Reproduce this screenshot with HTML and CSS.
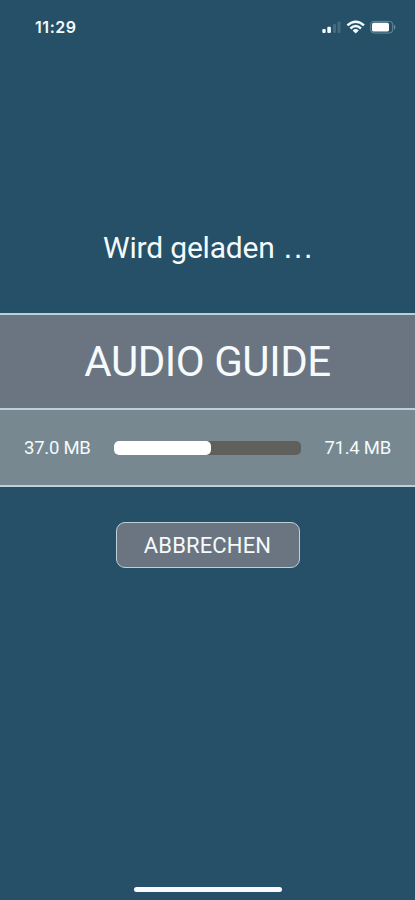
FILE: index.html
```html
<!DOCTYPE html>
<html lang="de">
<head>
<meta charset="utf-8">
<meta name="viewport" content="width=device-width">
<title>Audio Guide</title>
<link rel="stylesheet" href="styles.css">
</head>
<body>
<div class="screen">
  <header class="status">
    <span class="clock">11:29</span>
    <svg class="indicators" width="76" height="18" viewBox="0 0 76 18" fill="none">
      <rect x="1.3" y="10" width="3.4" height="4" rx="1" fill="#f2f9fb"/>
      <rect x="6.3" y="7.8" width="3.6" height="6.2" rx="1" fill="#f2f9fb"/>
      <rect x="12" y="5" width="3" height="9" rx="1" fill="#456b7d"/>
      <rect x="16.5" y="2.5" width="3" height="11.5" rx="1" fill="#456b7d"/>
      <g stroke="#f2f9fb" stroke-width="2.4">
        <path d="M26.4 6.3Q34.7-.9 43 6.3"/>
        <path d="M29.4 9.5Q34.7 4.7 40 9.5"/>
      </g>
      <path d="M31.6 11.4Q34.7 8.8 37.8 11.4L34.7 14.6Z" fill="#f2f9fb"/>
      <rect x="49.7" y="2.4" width="22" height="11.6" rx="3.2" stroke="#6a8b99"/>
      <rect x="51" y="3.8" width="17" height="8.8" rx="1.7" fill="#fff"/>
      <path d="M73 5.5Q76 8.2 73 10.9Z" fill="#6a8b99"/>
    </svg>
  </header>
  <main class="content">
    <h1 class="heading">Wird geladen <span class="dots">…</span></h1>
    <section class="panel">
      <h2 class="name">AUDIO GUIDE</h2>
      <div class="progress">
        <span class="size">37.0 MB</span>
        <div class="track"><div class="fill"></div></div>
        <span class="size">71.4 MB</span>
      </div>
    </section>
    <button class="cancel" type="button">ABBRECHEN</button>
  </main>
  <div class="home"></div>
</div>
</body>
</html>
```
FILE: styles.css
```css
* { box-sizing: border-box; }
body { margin: 0; background: #265067; color: #f5fafc; font-family: Roboto, sans-serif; }
.screen { height: 900px; display: flex; flex-direction: column; overflow: hidden; }
.status { height: 54px; flex: none; display: flex; justify-content: space-between; align-items: flex-start; padding: 19px 18px 0 35px; }
.clock { font: 600 16px/17px Inter, sans-serif; letter-spacing: .55px; }
.content { flex: 1; display: flex; flex-direction: column; align-items: center; }
.heading { margin: 176px 0 0; padding-left: 2px; font-size: 30px; line-height: 36px; font-weight: 400; letter-spacing: -.2px; white-space: nowrap; }
.dots { font: 400 32px/30px "Liberation Sans", sans-serif; letter-spacing: 0; }
.panel { width: 100%; margin-top: 47px; border: solid #bdcfd9; border-width: 2px 0; }
.name { margin: 0; height: 95px; font-size: 42px; line-height: 94px; font-weight: 400; letter-spacing: -.45px; text-align: center; background: #6b7582; border-bottom: 2px solid #bdcfd9; }
.progress { height: 75px; display: flex; align-items: center; justify-content: space-between; padding: 0 24px; background: #778891; }
.size { font-size: 18.5px; line-height: 24px; letter-spacing: -.25px; white-space: nowrap; }
.track { width: 187px; height: 14px; border-radius: 5px; background: #5f5f5b; }
.fill { width: 97px; height: 14px; border-radius: 5px; background: #fff; }
.cancel { width: 184px; height: 46px; margin: 35px 0 0; padding: 1px 0 0; border: 1.5px solid #bdcfd9; border-radius: 9px; background: #6b7582; color: inherit; font: 400 22px/42px Roboto, sans-serif; letter-spacing: .15px; }
.home { flex: none; width: 148px; height: 5px; margin: 0 auto 8px; border-radius: 3px; background: #fafaff; }
```
